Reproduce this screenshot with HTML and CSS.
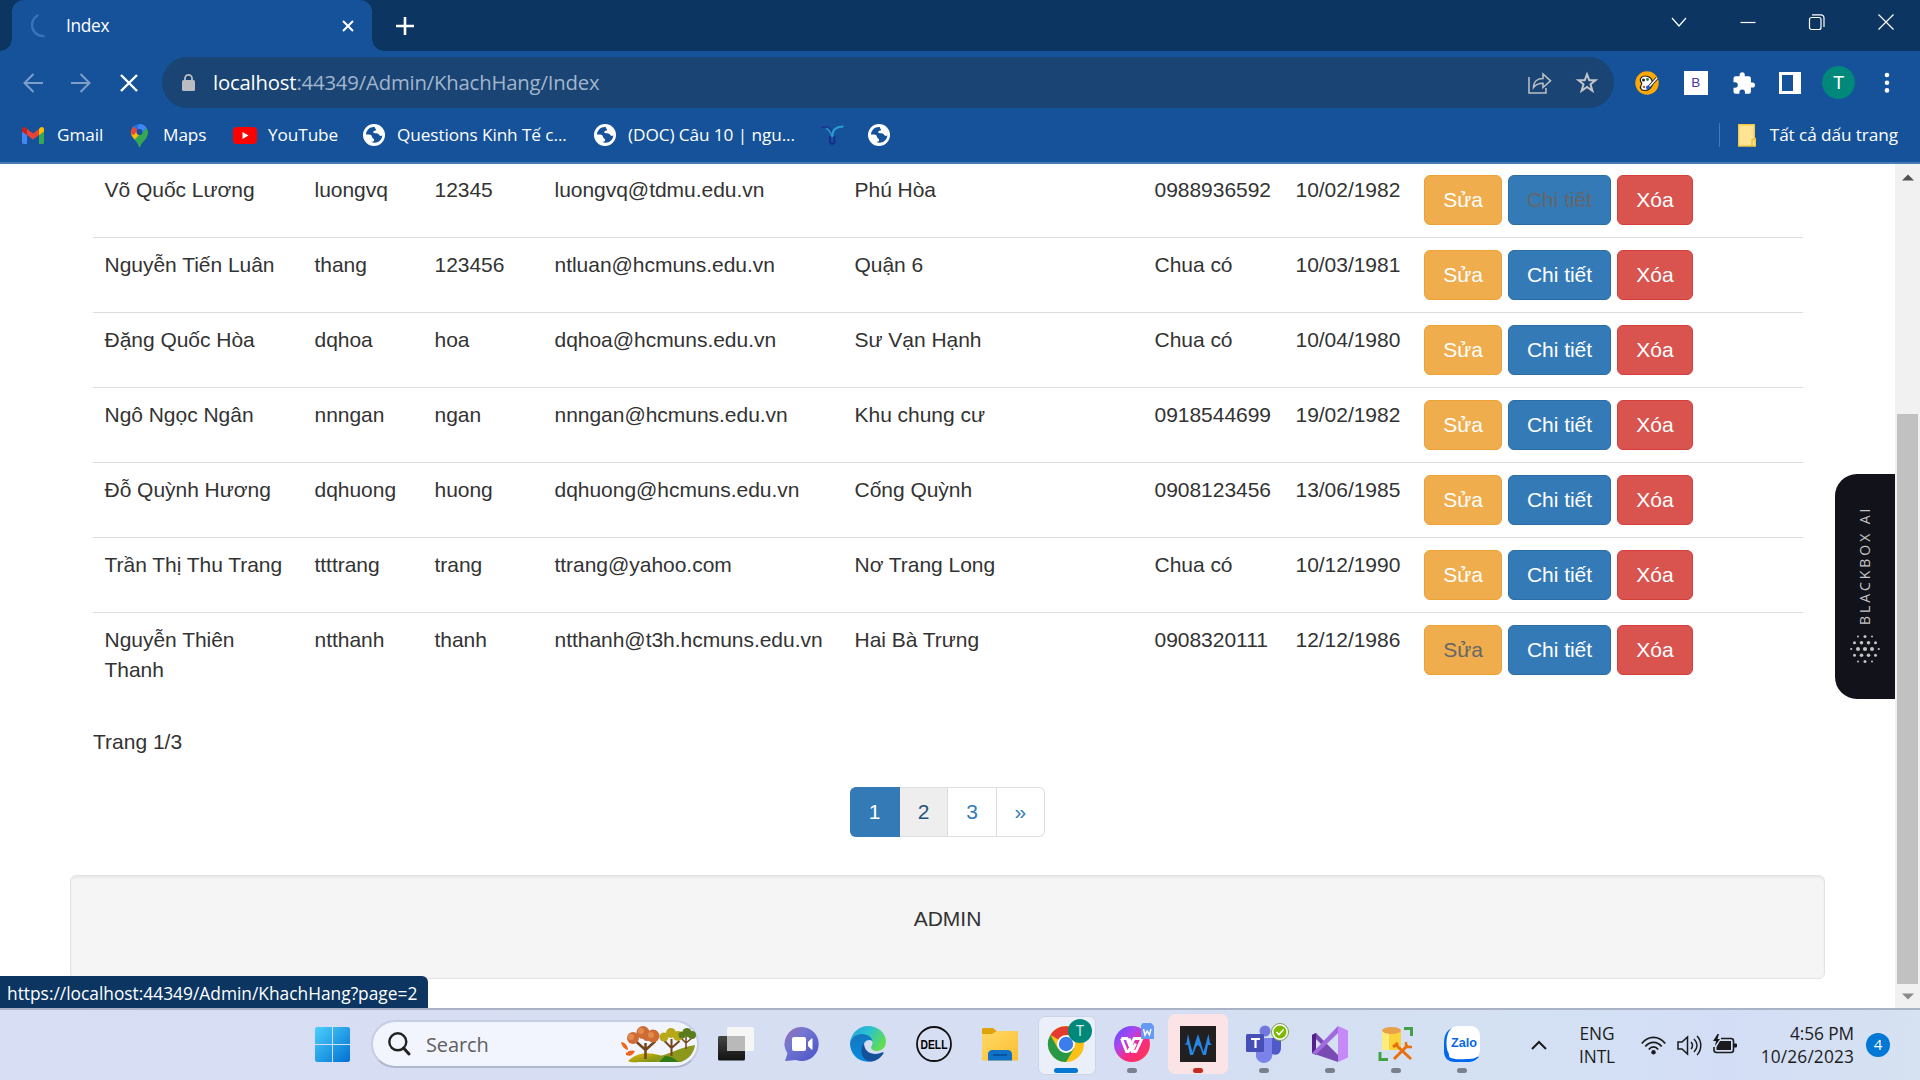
FILE: index.html
```
<!DOCTYPE html>
<html lang="vi">
<head>
<meta charset="utf-8">
<title>Index</title>
<link rel="stylesheet" href="styles.css">
</head>
<body>
<svg width="0" height="0" class="defs">
  <defs>
    <symbol id="globe" viewBox="0 0 22 22"><circle cx="11" cy="11" r="11" fill="#fff"/><path d="M11.800 3C7 2.500 3 6.200 3 10.500c1.500 0 3.500-.2 5 .6 1.200.8.600 2.600 2 3.300.9.400 1.300.8 1 2.200-.1 1-1.300 1.300-2.700 1.300 5 2.600 11-1.400 11-6.700-1 1.300-2.300.9-3-.2-.7-1.600-2.300-1.900-4.300-1.800-1.400 0-2.300-.9-1.400-2 .6-.7 2.300-.2 2.500-1.400.1-1-1.400-1.100-1.300-2.800z" fill="#15529a"/></symbol>
    <linearGradient id="win" x1="0" y1="0" x2="1" y2="1"><stop offset="0" stop-color="#4cd0fd"/><stop offset="1" stop-color="#0070d2"/></linearGradient>
    <linearGradient id="chat" x1="0" y1="0" x2="1" y2="1"><stop offset="0" stop-color="#9c6bb0"/><stop offset=".35" stop-color="#7377d0"/><stop offset="1" stop-color="#4a51c6"/></linearGradient>
    <linearGradient id="edgeTop" x1="0" y1="0" x2="1" y2=".5"><stop offset="0" stop-color="#229fe0"/><stop offset=".5" stop-color="#2bc2cf"/><stop offset="1" stop-color="#60dc55"/></linearGradient>
    <linearGradient id="edgeLeft" x1="0" y1="0" x2="0" y2="1"><stop offset="0" stop-color="#1577be"/><stop offset="1" stop-color="#078be0"/></linearGradient>
    <linearGradient id="fold" x1="0" y1="0" x2="1" y2="1"><stop offset="0" stop-color="#ffd968"/><stop offset="1" stop-color="#fcbe2f"/></linearGradient>
    <linearGradient id="wps" x1="0" y1="0" x2="1" y2="1"><stop offset="0" stop-color="#564cff"/><stop offset=".35" stop-color="#ad45f0"/><stop offset=".6" stop-color="#f72a83"/><stop offset="1" stop-color="#ff3c48"/></linearGradient>
    <linearGradient id="hill" x1="0" y1="0" x2="1" y2="1"><stop offset="0" stop-color="#f0b80c"/><stop offset="1" stop-color="#5d8a18"/></linearGradient>
    <linearGradient id="dark" x1="0" y1="0" x2="0" y2="1"><stop offset="0" stop-color="#454545"/><stop offset="1" stop-color="#111"/></linearGradient>
  </defs>
</svg>

<header class="browser">
  <div class="tabstrip">
    <div class="tab">
      <svg class="spinner" width="22" height="24" viewBox="0 0 22 24"><path d="M8.500 1.500A11 11 0 0 0 14.500 22" fill="none" stroke="#3a72bd" stroke-width="2.600" stroke-linecap="round"/></svg>
      <span class="tab-title">Index</span>
      <svg width="12" height="12" viewBox="0 0 12 12"><path d="M1 1l10 10M11 1L1 11" stroke="#fff" stroke-width="2"/></svg>
    </div>
    <svg class="newtab" width="18" height="18" viewBox="0 0 18 18"><path d="M9 0v18M0 9h18" stroke="#fff" stroke-width="2.600"/></svg>
    <div class="winbtns">
      <svg width="16" height="16" viewBox="0 0 16 16"><path d="M1 4l7 8 7-8"/></svg>
      <svg width="16" height="16" viewBox="0 0 16 16"><path d="M.5 8.500h15"/></svg>
      <svg width="16" height="16" viewBox="0 0 16 16"><rect x=".5" y="3.500" width="11.500" height="12" rx="2"/><path d="M3 .8h9a3 3 0 0 1 3 3V13"/></svg>
      <svg width="16" height="16" viewBox="0 0 16 16"><path d="M.5.500l15 15M15.500.5l-15 15"/></svg>
    </div>
  </div>
  <div class="toolbar">
    <div class="nav">
      <svg width="20" height="20" viewBox="0 0 20 20"><path d="M20 10H2M10.500 1L1.500 10l9 9" stroke="#7d9fca" stroke-width="2" fill="none"/></svg>
      <svg width="20" height="20" viewBox="0 0 20 20"><path d="M0 10h18M9.500 1l9 9-9 9" stroke="#7d9fca" stroke-width="2" fill="none"/></svg>
      <svg class="stop" width="18" height="18" viewBox="0 0 18 18"><path d="M1 1l16 16M17 1L1 17" stroke="#fff" stroke-width="2.400"/></svg>
    </div>
    <div class="omnibox">
      <svg width="13" height="17" viewBox="0 0 13 17"><rect y="6" width="13" height="11" rx="1.500" fill="#b9bdc2"/><path d="M3 7V4.300a3.500 3.500 0 0 1 7 0V7" fill="none" stroke="#b9bdc2" stroke-width="1.800"/></svg>
      <span class="url"><b>localhost</b>:44349/Admin/KhachHang/Index</span>
      <svg width="24" height="22" viewBox="0 0 24 22"><path d="M1 5v16h17v-5M5.500 15.500c0-6 4-9 9.500-9V2l7.500 6.800L15 15.500v-4.200c-4 0-7 .7-9.500 4.200z" fill="none" stroke="#b9bdc2" stroke-width="1.600"/></svg>
      <svg class="star" width="22" height="22" viewBox="0 0 22 22"><path d="M11 2.300l2.300 6h6.200l-5 4 1.900 6.500L11 15l-5.400 3.800 1.900-6.500-5-4h6.200z" fill="none" stroke="#c4c6ca" stroke-width="2"/></svg>
    </div>
    <div class="exts">
      <svg width="24" height="24" viewBox="0 0 24 24"><circle cx="12" cy="12" r="11.700" fill="#fca806"/><path d="M10 5c-3 0-5.500 2.500-4.500 5 .5 1.500 2 2 1 3.500-2 2.500-1 6 3 6s8-3 8-7.500S14 5 10 5z" fill="#fff" stroke="#222" stroke-width="1.200"/><circle cx="8.500" cy="9" r="1.500" fill="#222"/><circle cx="12.500" cy="8.500" r="1.400" fill="#187b38"/><circle cx="9" cy="16" r="1.300" fill="#b06a25"/><path d="M22 7l-8 9" stroke="#222" stroke-width="3.200"/><path d="M22 7l-8 9" stroke="#fff" stroke-width="1.500"/><circle cx="13" cy="16.500" r="2" fill="#1757d1"/></svg>
      <span class="bext">B</span>
      <svg width="22" height="22" viewBox="1.500 1 21.500 21"><path d="M20.500 11H19V7a2 2 0 0 0-2-2h-4V3.500a2.500 2.500 0 0 0-5 0V5H4a2 2 0 0 0-2 2v3.800h1.500a2.700 2.700 0 0 1 0 5.400H2V20a2 2 0 0 0 2 2h3.800v-1.500a2.700 2.700 0 0 1 5.400 0V22H17a2 2 0 0 0 2-2v-4h1.500a2.500 2.500 0 0 0 0-5z" fill="#fff"/></svg>
      <svg width="22" height="22" viewBox="0 0 22 22"><path d="M0 0h22v22H0zM3 3v16h11V3z" fill="#fff" fill-rule="evenodd"/></svg>
      <span class="avatar">T</span>
      <svg width="6" height="22" viewBox="0 0 6 22"><g fill="#fff"><circle cx="3" cy="3" r="2.300"/><circle cx="3" cy="10.700" r="2.300"/><circle cx="3" cy="18.400" r="2.300"/></g></svg>
    </div>
  </div>
  <nav class="bookmarks">
    <a class="bm gm"><svg width="22" height="17" viewBox="0 0 22 17"><path d="M0 3v12.500C0 16.300.700 17 1.500 17H5V7z" fill="#4285f4"/><path d="M22 3v12.500c0 .8-.7 1.500-1.500 1.500H17V7z" fill="#34a853"/><path d="M17 2v6l5-3.500V2.300C22 0 19.500-.8 18 .7z" fill="#fbbc04"/><path d="M5 8V2l6 4.500L17 2v6l-6 4.500z" fill="#ea4335"/><path d="M0 2.300v2.200L5 8V2L4 .7C2.500-.8 0 0 0 2.300z" fill="#c5221f"/></svg><span>Gmail</span></a>
    <a class="bm mp"><svg width="17" height="23" viewBox="0 0 17 23"><path d="M8.500 0C3.800 0 0 3.800 0 8.500c0 3 1.500 5 4 7.500L15 3A8.400 8.400 0 0 0 8.500 0z" fill="#1a73e8"/><path d="M2 3L0 8c0 3.500 2 5.500 4 8l5-6z" fill="#fbbc04"/><path d="M2.500 2.500L6.500 6 3 11 .5 10C-.5 7 .5 4.500 2.500 2.500z" fill="#ea4335"/><path d="M15.500 4l-12 11.500c2.500 3 3.700 4.500 4.300 7.500h1.400c1-5 7.800-8 7.800-14.500 0-1.600-.5-3.200-1.500-4.500z" fill="#34a853"/><path d="M8.500 0c3 0 5.500 1.500 7 4l-4 4-5-4.500z" fill="#4285f4"/><circle cx="8.500" cy="8" r="3" fill="#174ea6"/></svg><span>Maps</span></a>
    <a class="bm yt"><svg width="24" height="17" viewBox="0 0 24 17"><rect width="24" height="17" rx="4" fill="#f00"/><path d="M9.500 5v7l6-3.500z" fill="#fff"/></svg><span>YouTube</span></a>
    <a class="bm q"><svg width="22" height="22"><use href="#globe"/></svg><span>Questions Kinh Tế c...</span></a>
    <a class="bm doc"><svg width="22" height="22"><use href="#globe"/></svg><span>(DOC) Câu 10 | ngu...</span></a>
    <a class="bm y"><svg width="23" height="20" viewBox="0 0 23 20"><path d="M0 2h5c3.500 0 5 3 6 7" fill="none" stroke="#1b3a96" stroke-width="2.200"/><path d="M5 3.500c3.500 1 5 4 6 8" fill="none" stroke="#2a94c8" stroke-width="1.600"/><path d="M22.500 1.500C16 1.500 12 3.500 11.500 9v3" fill="none" stroke="#2a9bd6" stroke-width="2.200"/><path d="M9 11v5c0 3.500 4.500 3.500 4.500 0v-5" fill="none" stroke="#172f8c" stroke-width="2"/></svg></a>
    <a class="bm"><svg width="22" height="22"><use href="#globe"/></svg></a>
    <a class="bm all"><svg width="18" height="23" viewBox="0 0 18 23"><path d="M.7.700h15.600v13.800h1V22H.7z" fill="#ffe593" stroke="#f1c944" stroke-width="1.400"/><path d="M14 22v-6l3-1.500" fill="none" stroke="#e8bf35" stroke-width="1.400"/></svg><span>Tất cả dấu trang</span></a>
  </nav>
</header>

<main class="viewport">
  <div class="page">
    <table class="customers">
      <colgroup><col class="c1"><col class="c2"><col class="c2"><col class="c3"><col class="c3"><col class="c4"><col class="c5"><col></colgroup>
      <tbody>
        <tr><td>Võ Quốc Lương</td><td>luongvq</td><td>12345</td><td>luongvq@tdmu.edu.vn</td><td>Phú Hòa</td><td>0988936592</td><td>10/02/1982</td><td><div class="acts"><a class="btn edit">Sửa</a><a class="btn info visited">Chi tiết</a><a class="btn del">Xóa</a></div></td></tr>
        <tr><td>Nguyễn Tiến Luân</td><td>thang</td><td>123456</td><td>ntluan@hcmuns.edu.vn</td><td>Quận 6</td><td>Chua có</td><td>10/03/1981</td><td><div class="acts"><a class="btn edit">Sửa</a><a class="btn info">Chi tiết</a><a class="btn del">Xóa</a></div></td></tr>
        <tr><td>Đặng Quốc Hòa</td><td>dqhoa</td><td>hoa</td><td>dqhoa@hcmuns.edu.vn</td><td>Sư Vạn Hạnh</td><td>Chua có</td><td>10/04/1980</td><td><div class="acts"><a class="btn edit">Sửa</a><a class="btn info">Chi tiết</a><a class="btn del">Xóa</a></div></td></tr>
        <tr><td>Ngô Ngọc Ngân</td><td>nnngan</td><td>ngan</td><td>nnngan@hcmuns.edu.vn</td><td>Khu chung cư</td><td>0918544699</td><td>19/02/1982</td><td><div class="acts"><a class="btn edit">Sửa</a><a class="btn info">Chi tiết</a><a class="btn del">Xóa</a></div></td></tr>
        <tr><td>Đỗ Quỳnh Hương</td><td>dqhuong</td><td>huong</td><td>dqhuong@hcmuns.edu.vn</td><td>Cống Quỳnh</td><td>0908123456</td><td>13/06/1985</td><td><div class="acts"><a class="btn edit">Sửa</a><a class="btn info">Chi tiết</a><a class="btn del">Xóa</a></div></td></tr>
        <tr><td>Trần Thị Thu Trang</td><td>ttttrang</td><td>trang</td><td>ttrang@yahoo.com</td><td>Nơ Trang Long</td><td>Chua có</td><td>10/12/1990</td><td><div class="acts"><a class="btn edit">Sửa</a><a class="btn info">Chi tiết</a><a class="btn del">Xóa</a></div></td></tr>
        <tr><td>Nguyễn Thiên Thanh</td><td>ntthanh</td><td>thanh</td><td>ntthanh@t3h.hcmuns.edu.vn</td><td>Hai Bà Trưng</td><td>0908320111</td><td>12/12/1986</td><td><div class="acts"><a class="btn edit visited">Sửa</a><a class="btn info">Chi tiết</a><a class="btn del">Xóa</a></div></td></tr>
      </tbody>
    </table>
    <p class="count">Trang 1/3</p>
    <div class="pager"><a class="active">1</a><a class="hover">2</a><a>3</a><a class="next">»</a></div>
    <footer class="well">ADMIN</footer>
  </div>
  <div class="scrollbar">
    <svg width="12" height="7" viewBox="0 0 12 7"><path d="M0 6.500L6 .5l6 6z" fill="#505050"/></svg>
    <div class="thumb"></div>
    <svg width="12" height="7" viewBox="0 0 12 7"><path d="M0 .5l6 6 6-6z" fill="#8a8a8a"/></svg>
  </div>
  <aside class="blackbox">
    <span>BLACKBOX AI</span>
    <svg width="30" height="30" viewBox="0 0 30 30"><g fill="#c4c4c6"><circle cx="8" cy="2.500" r="1"/><circle cx="15" cy="2.500" r="1.500"/><circle cx="22" cy="2.500" r="1"/><circle cx="4.500" cy="8.700" r="1.500"/><circle cx="11.500" cy="8.700" r="1.800"/><circle cx="18.500" cy="8.700" r="1.800"/><circle cx="25.500" cy="8.700" r="1.500"/><circle cx="1.200" cy="15" r="1.100"/><circle cx="8" cy="15" r="2"/><circle cx="15" cy="15" r="2.100"/><circle cx="22" cy="15" r="2"/><circle cx="28.800" cy="15" r="1.100"/><circle cx="4.500" cy="21.300" r="1.500"/><circle cx="11.500" cy="21.300" r="1.800"/><circle cx="18.500" cy="21.300" r="1.800"/><circle cx="25.500" cy="21.300" r="1.500"/><circle cx="8" cy="27.500" r="1"/><circle cx="15" cy="27.500" r="1.500"/><circle cx="22" cy="27.500" r="1"/></g></svg>
  </aside>
  <div class="status">https://localhost:44349/Admin/KhachHang?page=2</div>
</main>

<footer class="taskbar">
  <svg class="start" width="35" height="35" viewBox="0 0 35 35"><path d="M1.500 0H17v17H0V1.500zM18 0h15.500L35 1.500V17H18zM0 18h17v17H1.500L0 33.500zM18 18h17v15.500L33.500 35H18z" fill="url(#win)"/></svg>
  <div class="search">
    <svg width="23" height="24" viewBox="0 0 23 24"><circle cx="9.800" cy="9.800" r="8.500" fill="none" stroke="#222" stroke-width="2.400"/><path d="M15.500 16l5.500 6" stroke="#222" stroke-width="3" stroke-linecap="round"/></svg>
    <span>Search</span>
    <svg class="trees" width="76" height="38" viewBox="0 0 76 38">
      <path d="M7 35c8-8 20-10 34-5l3 6H20c-6 0-10 1-13-1z" fill="url(#hill)"/><path d="M36 30c10 0 20-8 38-11-1 8-6 14-14 17H34z" fill="#8b981b"/><path d="M44 30c8 0 10 4 14 6h-20z" fill="#2f7b16"/>
      <g stroke="#75451c" fill="none"><path d="M24.500 33V17M24.500 24l-10-9M24.500 24l10-9" stroke-width="2.500"/><path d="M50.500 30V13M50.500 22l-7-7M50.500 22l8-7" stroke-width="2"/><path d="M65 23V11M65 17l-5-5M65 17l6-5" stroke-width="1.500"/></g>
      <g fill="#cf6b35"><circle cx="12" cy="12" r="6"/><circle cx="22" cy="6.500" r="6.500"/><circle cx="32" cy="10" r="6.500"/><circle cx="26" cy="11" r="4"/></g><g fill="#e28c4b"><circle cx="20" cy="5" r="3"/><circle cx="30" cy="9" r="3"/><circle cx="10" cy="11" r="3"/></g>
      <g fill="#b7a817"><circle cx="43" cy="11" r="4.500"/><circle cx="50" cy="7" r="5"/><circle cx="57" cy="10" r="5"/></g>
      <g fill="#5b7c1d"><circle cx="61" cy="9" r="3.500"/><circle cx="66" cy="6.500" r="4.500"/><circle cx="71" cy="9" r="4"/></g>
      <path d="M0 16c4 0 7 4 7 8-4-1-6-4-7-8zM5 27c3-3 7-3 9-2-2 4-5 6-9 4z" fill="#ee641d"/>
    </svg>
  </div>
  <div class="apps">
    <div class="app"><svg width="36" height="36" viewBox="0 0 36 36"><rect y="10" width="27" height="24.500" rx="1.500" fill="url(#dark)"/><rect x="9" y="1" width="27" height="24" rx="1.500" fill="#f6f6f6"/><path d="M9 10h18v15H9z" fill="#b9b9b9"/></svg></div>
    <div class="app"><svg width="36" height="36" viewBox="0 0 36 36"><path d="M18 1a17 17 0 1 1-6 33L1 35l2.500-7.500A17 17 0 0 1 18 1z" fill="url(#chat)"/><rect x="8" y="11" width="14" height="14" rx="2" fill="#fff"/><path d="M24 16l3.500-3.500c.6-.5 1 0 1 .5v10c0 .5-.4 1-1 .5L24 20z" fill="#fff"/></svg></div>
    <div class="app"><svg width="36" height="36" viewBox="0 0 36 36"><path d="M0 17C1 7 9 0 18 0c10 0 18 7 18 15.500C36 21 32 25 27 25c-4 0-6-2-6-3.500s1.500-2 1.500-4.500C22.500 12 17 9 11 9 6 9 2 12 0 17z" fill="url(#edgeTop)"/><path d="M0 17C1.500 11.500 6 8 12 8c6.500 0 10 4 10.500 7-5-3-9 1-9 5.500 0 6.500 5.500 12.500 12 13.500C13 39.500 0 31 0 17z" fill="url(#edgeLeft)"/><path d="M14 17c-6 8-1 19 8 18.500 5-1 9-4 11.500-8 .5-1-.5-1.500-1.500-1C24 30 14 27 14 17z" fill="#14519a"/></svg></div>
    <div class="app"><svg width="36" height="36" viewBox="0 0 36 36"><circle cx="18" cy="18" r="17" fill="none" stroke="#111" stroke-width="1.800"/><text x="4.500" y="22.500" class="dell" textLength="27" lengthAdjust="spacingAndGlyphs">DELL</text></svg></div>
    <div class="app"><svg width="36" height="36" viewBox="0 0 36 36"><path d="M0 3.500C0 2.500.700 2 1.500 2H11l3.500 3H34v6H0z" fill="#e1a30b"/><path d="M0 8h10l5-3h20c.6 0 1 .4 1 1v28.500H0z" fill="url(#fold)"/><path d="M6 34.500V28c0-2.200 1.800-4 4-4h16c2.200 0 4 1.800 4 4v6.500z" fill="#0f72c8"/><path d="M11 29h14" stroke="#084a91" stroke-width="1.500"/></svg></div>
    <div class="app current"><svg width="36" height="36" viewBox="0 0 36 36"><circle cx="18" cy="18" r="18" fill="#fbc116"/><path d="M18 18L2.500 9A18 18 0 0 1 33.500 9H18z" fill="#e33b2e"/><path d="M2.400 9A18 18 0 0 0 18 36l8-13.500H10z" fill="#279847"/><circle cx="18" cy="18" r="9" fill="#fff"/><circle cx="18" cy="18" r="7.200" fill="#3b7ded"/></svg><span class="profile">T</span></div>
    <div class="app dot"><svg width="40" height="40" viewBox="0 -4 40 40"><circle cx="18" cy="18" r="18" fill="url(#wps)"/><path d="M7.500 12.500h5.500l5 13 3.500-8M7.500 12.500l5 13h2l5.500-13h8l-6 13h-2l-5-13" fill="none" stroke="#fff" stroke-width="2.800" stroke-linejoin="round"/><path d="M27-1l2-2h8l3 3v13H27z" fill="#669af2"/><path d="M29.500 3l1.500 6 2.200-4 2.200 4 1.600-6" fill="none" stroke="#fff" stroke-width="1.400"/></svg></div>
    <div class="app alert dot"><svg width="36" height="36" viewBox="0 0 36 36"><path d="M0 0h36v36H0z" fill="#211f1f"/><path d="M4.500 18.500l2-1.500L8 8l2 9 2.500 9L15 17l3-9 3 9 2.500 9 2.500-9 2.500-9 1.500 9 2 1.500-2.500.5-1.500 0-2 10h-3l-3-8-2-2-2 2-3 8h-3l-2-10z" fill="#2686e7"/></svg></div>
    <div class="app dot"><svg width="44" height="40" viewBox="0 -3 44 40"><circle cx="19" cy="6" r="5.500" fill="#7278de"/><path d="M10 13h16v14a8 8 0 0 1-16 5z" fill="#7b83eb"/><path d="M26 13h9v9c0 7-4 9-9 7z" fill="#5059c9"/><rect y="9" width="18" height="18" rx="1.500" fill="#464eb8"/><path d="M5 14h9M9.500 14v9" stroke="#fff" stroke-width="2.200"/><circle cx="34" cy="7" r="8.500" fill="#fff" stroke="#7b9c4c" stroke-width="1"/><circle cx="34" cy="7" r="6.500" fill="#7cb900"/><path d="M30.500 7l2.500 2.500 4.500-5" fill="none" stroke="#fff" stroke-width="1.600"/></svg></div>
    <div class="app dot"><svg width="36" height="36" viewBox="0 0 36 36"><path d="M0 9l4-2 22 22v7L4 28.500 0 27z" fill="#7a4cb3"/><path d="M0 9l4-2v22l-4-2z" fill="#52218a"/><path d="M4 28.500L26 7V0L0 27z" fill="#a16ade"/><path d="M26 0l10 4.500v27L26 36z" fill="#c58af8"/><path d="M4 13l5 5-5 5z" fill="#d9def5"/></svg></div>
    <div class="app dot"><svg width="36" height="36" viewBox="0 0 36 36"><path d="M4 4h19v20H4z" fill="#fbd43c"/><path d="M4 4h7v20H4z" fill="#ffeb7c"/><ellipse cx="13.500" cy="4.500" rx="9.500" ry="3.500" fill="#e9a04b"/><path d="M26 2.500h7.500V10M2 26v7.500h8" fill="none" stroke="#43a047" stroke-width="3"/><path d="M16 33l14-14M18 19l15 14M15 21l5-4" stroke="#e8710f" stroke-width="3"/><path d="M28 16v5h6" fill="none" stroke="#e8710f" stroke-width="2.500"/></svg></div>
    <div class="app dot"><svg width="36" height="36" viewBox="0 0 36 36"><path d="M12 1C3 3 0 8 0 18v7c0 7 4 11 11 11h12c6 0 9-2 12-5L10 24z" fill="#0068ed"/><path d="M14 0h12c7 0 10 4 10 11v12c0 7-4 10-11 10-8 0-12 1-18-1C4 31 6 29 4 26 1 18 2 0 14 0z" fill="#fff"/><text x="7" y="21" class="zalo" textLength="26" lengthAdjust="spacingAndGlyphs">Zalo</text></svg></div>
  </div>
  <div class="tray">
    <svg width="16" height="9" viewBox="0 0 16 9"><path d="M1 8l7-7 7 7" fill="none" stroke="#1b1b1b" stroke-width="2"/></svg>
    <div class="lang">ENG<br>INTL</div>
    <svg class="wifi" width="25" height="19" viewBox="0 0 25 19"><g fill="none" stroke="#1b1b1b" stroke-width="1.700"><path d="M.8 7.500C7-.8 18-.8 24.200 7.500M4.300 10.500c4.300-5.600 12.100-5.600 16.400 0M7.800 13.500c2.600-3.600 6.800-3.600 9.400 0"/></g><circle cx="12.500" cy="16.300" r="2.200" fill="#1b1b1b"/></svg>
    <svg class="vol" width="24" height="21" viewBox="0 0 24 21"><g fill="none" stroke="#1b1b1b" stroke-width="1.500"><path d="M1 7v7h4l5.500 5V2L5 7zM14 7c2 2 2 5 0 7M17 4c4 4 4 9 0 13M20 1c5 5 5 14 0 19"/></g></svg>
    <svg class="bat" width="24" height="20" viewBox="0 0 24 20"><path d="M8 4.500h10c1.500 0 2.500 1 2.500 2.500v9c0 1.500-1 2.500-2.500 2.500H3.500C2 18.500 1 17.500 1 16v-3" fill="none" stroke="#1b1b1b" stroke-width="1.600"/><path d="M7 7h11v9H3.500v-3zM21 9.500h1.500c1 0 1.500.5 1.500 1v2c0 .5-.5 1-1.500 1H21zM4.500 0L0 7h3l-1 5 5-7H4.500L6 0z" fill="#1b1b1b"/></svg>
    <div class="clock">4:56 PM<br><span>10/26/2023</span></div>
    <span class="notif">4</span>
  </div>
</footer>
</body>
</html>
```
FILE: styles.css
```
* { box-sizing: border-box; }
body {
  margin: 0;
  width: 1920px;
  height: 1080px;
  overflow: hidden;
  display: flex;
  flex-direction: column;
  background: #fff;
  font-family: "Open Sans", "Noto Sans", sans-serif;
}
.defs { position: absolute; }
svg { display: block; flex: none; overflow: visible; }

/* browser frame */
.browser { height: 164px; flex: none; background: #15529a; border-bottom: 2px solid #477bb1; color: #fff; }
.tabstrip { height: 51px; background: #0c3661; display: flex; align-items: center; padding-left: 12px; }
.tab {
  position: relative;
  width: 360px; height: 51px;
  background: #15529a;
  border-radius: 12px 12px 0 0;
  display: flex; align-items: center;
  padding: 0 18px 0 17px;
}
.tab::before, .tab::after { content: ""; position: absolute; bottom: 0; width: 12px; height: 12px; }
.tab::before { left: -12px; background: radial-gradient(circle at 0 0, #0c3661 11.5px, #15529a 12px); }
.tab::after { right: -12px; background: radial-gradient(circle at 100% 0, #0c3661 11.5px, #15529a 12px); }
.tab-title { font-size: 17.3px; margin-left: 15px; margin-right: auto; letter-spacing: -.3px; }
.newtab { margin-left: 24px; }
.winbtns { margin-left: auto; display: flex; gap: 53px; padding: 0 26px 8px 0; }
.winbtns svg { fill: none; stroke: #fff; stroke-width: 1.2; }
.toolbar { height: 63px; display: flex; align-items: center; padding: 0 30px 0 23px; }
.nav { width: 139px; display: flex; align-items: center; gap: 28px; }
.stop { margin-left: 1px; }
.omnibox {
  width: 1452px; height: 51px;
  border-radius: 26px;
  background: #194473;
  display: flex; align-items: center;
  padding: 0 16px 0 20px;
}
.url { font-size: 20.3px; margin: 0 auto 1px 18px; color: #a3b6cd; letter-spacing: -.17px; }
.url b { font-weight: 400; color: #fff; }
.star { margin-left: 24px; }
.exts { flex: 1; margin-left: 21px; display: flex; align-items: center; justify-content: space-between; }
.bext { width: 24px; height: 24px; background: #fff; color: #4a35b5; font: 13.5px/24px "Liberation Sans", sans-serif; text-align: center; }
.avatar { width: 33px; height: 33px; margin: 0 4px 0 -4px; border-radius: 50%; background: #00897b; font: 19px/33px Roboto, sans-serif; text-align: center; }
.bookmarks { height: 42px; display: flex; align-items: center; padding: 0 22px; font-size: 17.2px; letter-spacing: -.08px; white-space: nowrap; }
.bm { display: flex; align-items: center; height: 42px; gap: 12px; }
.bm span { margin-bottom: 2px; }
.gm { width: 109px; gap: 13px; }
.mp { width: 102px; gap: 15px; }
.yt { width: 130px; gap: 11px; }
.q { width: 231px; }
.doc { width: 227px; }
.y { width: 47px; }
.all { margin-left: auto; gap: 14px; }
.all::before { content: ""; width: 1px; height: 24px; background: #4478b4; margin-right: 4px; }

/* web page */
.viewport { position: relative; flex: none; height: 844px; display: flex; overflow: hidden; font: 21px/30px "Liberation Sans", Arial, sans-serif; color: #333; }
.page { width: 1895px; padding: 0 70px; margin-top: -2px; }
.customers { table-layout: fixed; width: 1710px; margin-left: 23px; border-spacing: 0; height: 535px; }
.customers td { padding: 12px 10px 12px 11.5px; border-top: 1px solid #ddd; vertical-align: top; height: 75px; white-space: nowrap; letter-spacing: -.03px; }
.customers td:first-child { white-space: normal; }
.customers td:last-child { padding-left: 12px; }
.c1 { width: 210px; }
.c2 { width: 120px; }
.c3 { width: 300px; }
.c4 { width: 141px; }
.c5 { width: 128px; }
.acts { display: flex; gap: 6px; }
.btn { height: 50px; border: 1px solid; border-radius: 6px; line-height: 48px; text-align: center; color: #fff; }
.edit { width: 78px; background: #f0ad4e; border-color: #eea236; }
.info { width: 103px; background: #337ab7; border-color: #2e6da4; }
.del { width: 76px; background: #d9534f; border-color: #d43f3a; }
.visited { color: #666; }
.count { margin: 30px 23px 0; }
.pager { display: flex; width: 195px; margin: 30px 0 0 780px; }
.pager a { flex: 1; height: 50px; border: 1px solid #ddd; border-left: 0; line-height: 48px; text-align: center; color: #337ab7; }
.pager .active { flex: 0 0 50px; background: #337ab7; border-color: #337ab7; color: #fff; border-radius: 6px 0 0 6px; }
.pager .hover { background: #eee; color: #23527c; }
.pager .next { border-radius: 0 6px 6px 0; }
.well { width: 1755px; height: 104px; margin-top: 38px; padding-top: 28px; text-align: center; background: #f5f5f5; border: 1px solid #e3e3e3; border-radius: 6px; box-shadow: inset 0 2px 2px rgba(0,0,0,.05); }
.scrollbar { width: 25px; background: #f1f1f1; display: flex; flex-direction: column; align-items: center; padding: 10px 0 8px; }
.thumb { width: 21px; height: 570px; margin: 233px 0 9px; background: #c1c1c1; }
.blackbox {
  position: absolute; left: 1835px; top: 310px;
  width: 60px; height: 225px;
  border-radius: 22px 0 0 22px;
  background: #12121a;
  display: flex; flex-direction: column; align-items: center;
  padding-top: 33px; gap: 9px;
}
.blackbox span { writing-mode: vertical-rl; transform: rotate(180deg); height: 118px; font: 14px/20px "Open Sans", sans-serif; letter-spacing: 2.95px; color: #c4c4c6; white-space: nowrap; }
.status { position: absolute; left: 0; bottom: 0; width: 428px; height: 32px; padding-left: 7px; border-radius: 0 6px 0 0; background: #0c3661; color: #fff; font: 17.35px/34px "Open Sans", sans-serif; white-space: nowrap; }

/* taskbar */
.taskbar { height: 72px; flex: none; border-top: 2px solid #aab2c6; background: linear-gradient(90deg, #d8def3 0, #d5def2 60%, #d4e1f3 78%, #d3def6 90%, #d6e1f1); display: flex; color: #1b1b1b; }
.start { margin: 17px 21px 0 315px; }
.search { width: 328px; height: 48px; margin-top: 10px; border: 2px solid #c6cee4; border-bottom-color: #b0b8ce; border-radius: 24px; background: #f2f5fd; display: flex; align-items: center; padding-left: 15px; font-size: 20px; color: #606060; }
.search span { margin: 0 auto 0 15px; letter-spacing: -.1px; }
.trees { margin-top: 2px; }
.apps { display: flex; margin-left: 4px; }
.app { position: relative; width: 66px; height: 70px; padding: 16px 0 0 15px; }
.app svg { position: relative; z-index: 1; }
.app svg[height="40"] { margin-top: -4px; }
.current::before, .alert::before { content: ""; position: absolute; left: 5px; top: 6px; width: 56px; height: 57px; border-radius: 7px; background: #ebeff9; border: 1px solid #ccd5e8; }
.alert::before { left: 3px; top: 4px; width: 60px; height: 60px; background: #fce4e6; border: 0; }
.current::after, .dot::after { content: ""; position: absolute; z-index: 1; left: 28px; top: 58px; width: 10px; height: 5px; border-radius: 3px; background: #7b818c; }
.current::after { left: 21px; width: 24px; background: #0578d4; }
.alert::after { background: #c62a20; }
.profile { position: absolute; z-index: 2; left: 35px; top: 9px; width: 24px; height: 24px; border-radius: 50%; background: #00897b; color: #d8ece9; font: 14px/25px Roboto, sans-serif; text-align: center; }
.dell { font: bold 12px "Liberation Sans", sans-serif; }
.zalo { font: bold 12.500px "Liberation Sans", sans-serif; fill: #0869ea; }
.tray { flex: 1; display: flex; align-items: center; padding: 0 30px 0 36px; }
.lang, .clock { font-size: 17.3px; line-height: 23.5px; letter-spacing: -.1px; }
.lang { width: 36px; text-align: center; margin-left: 32px; }
.wifi { margin-left: 26px; }
.vol { margin-left: 11px; }
.bat { margin: 0 0 3px 12px; }
.clock { margin-left: auto; text-align: right; margin-right: 12px; }
.clock span { letter-spacing: .15px; }
.notif { width: 24px; height: 24px; border-radius: 50%; background: #0078d4; color: #fff; font-size: 15px; line-height: 23px; text-align: center; }
```
